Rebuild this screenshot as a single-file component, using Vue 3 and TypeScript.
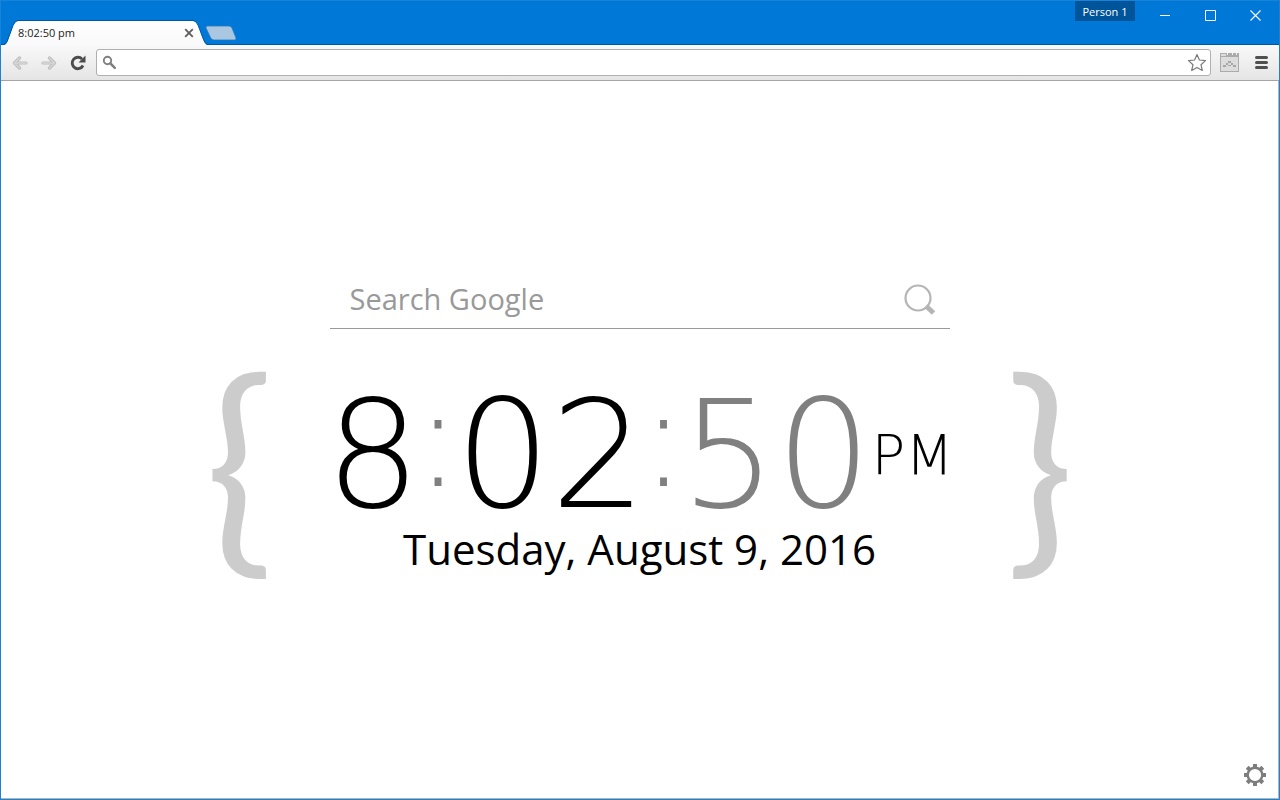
<script setup lang="ts">
import { ref } from 'vue'

const address = ref('')
const query = ref('')
const title = '8:02:50 pm'
const time = { hours: '8', minutes: '02', seconds: '50', period: 'PM' }
const date = 'Tuesday, August 9, 2016'
</script>

<template>
  <div class="window">
    <header class="titlebar">
      <div class="tabs">
        <div class="tab">
          <svg class="tab-shape" width="208" height="26" viewBox="0 0 208 26" aria-hidden="true">
            <defs>
              <linearGradient id="tabFill" x1="0" y1="0" x2="0" y2="1">
                <stop offset="0" stop-color="#ffffff" />
                <stop offset="1" stop-color="#f9f9f9" />
              </linearGradient>
            </defs>
            <path d="M0 26V25C3 25 4 23 5 20L10 6Q12 1 15 1H190Q193 1 195 5L200 19C202 24 203 25 206 25V26Z" fill="url(#tabFill)" />
            <path d="M0 24.500C3 24 4 22 5 19L10 5.500Q12 .5 15 .5H190Q193 .5 195 5L200 18C202 23 203 24.500 206 24.500" fill="none" stroke="#0058a3" />
          </svg>
          <span class="tab-title">{{ title }}</span>
          <button class="tab-close" aria-label="Close tab">
            <svg width="10" height="10" viewBox="0 0 10 10"><path d="M1.200 1.200L8.800 8.800M8.800 1.200L1.200 8.800" stroke="#5f5f5f" stroke-width="1.900" /></svg>
          </button>
        </div>
        <button class="new-tab" aria-label="New tab">
          <svg width="32" height="16" viewBox="0 0 32 16"><path d="M2.500 1H24Q26 1 27 3L31 13Q31.500 15 29.500 15H9Q6.500 15 5.500 12.500L1 3Q.5 1 2.500 1Z" fill="#a9c7e0" stroke="#2a78bd" stroke-width=".8" /></svg>
        </button>
      </div>
      <div class="controls">
        <button class="person">Person 1</button>
        <button class="control" aria-label="Minimize"><svg width="11" height="11" viewBox="0 0 11 11"><path d="M0 5.500H10" stroke="#fff" /></svg></button>
        <button class="control" aria-label="Maximize"><svg width="11" height="11" viewBox="0 0 11 11"><path d="M.5 .5H10.500V10.500H.5Z" fill="none" stroke="#fff" /></svg></button>
        <button class="control" aria-label="Close window"><svg width="11" height="11" viewBox="0 0 11 11"><path d="M.5 .5L10.500 10.500M10.500 .5L.5 10.500" stroke="#fff" stroke-width="1.100" /></svg></button>
      </div>
    </header>

    <nav class="toolbar">
      <button class="tool" aria-label="Back">
        <svg width="16" height="14" viewBox="0 0 16 14"><path d="M7.500 2L2.500 7L7.500 12M3 7H14" fill="none" stroke="#bcbcbc" stroke-width="3.200" stroke-linecap="round" stroke-linejoin="round" /><path d="M7.500 2L2.500 7L7.500 12M3 7H14" fill="none" stroke="#d6d6d6" stroke-width="1.500" stroke-linecap="round" /></svg>
      </button>
      <button class="tool" aria-label="Forward">
        <svg width="16" height="14" viewBox="0 0 16 14"><path d="M8.500 2L13.500 7L8.500 12M2 7H13" fill="none" stroke="#bcbcbc" stroke-width="3.200" stroke-linecap="round" stroke-linejoin="round" /><path d="M8.500 2L13.500 7L8.500 12M2 7H13" fill="none" stroke="#d6d6d6" stroke-width="1.500" stroke-linecap="round" /></svg>
      </button>
      <button class="tool" aria-label="Reload">
        <svg width="16" height="16" viewBox="0 0 16 16"><path d="M12 4A5.700 5.700 0 1 0 13 10.500" fill="none" stroke="#4c4c4c" stroke-width="2.900" /><path d="M15.500 .5V7.500H8.500Z" fill="#4c4c4c" /></svg>
      </button>
      <div class="omnibox">
        <svg width="15" height="15" viewBox="0 0 15 15" aria-hidden="true"><circle cx="5.500" cy="5.500" r="3.700" fill="none" stroke="#808080" stroke-width="1.900" /><path d="M8.500 8.500L12.800 12.800" stroke="#808080" stroke-width="2.500" stroke-linecap="round" /></svg>
        <input v-model="address" type="text" aria-label="Address" />
        <button class="star" aria-label="Bookmark this page">
          <svg width="20" height="19" viewBox="0 0 20 19"><path d="M10 1.500L12.400 7L18.500 7.600L14 11.700L15.300 17.500L10 14.400L4.700 17.500L6 11.700L1.500 7.600L7.600 7Z" fill="#fff" stroke="#7b7b7b" stroke-width="1.200" stroke-linejoin="round" /></svg>
        </button>
      </div>
      <button class="extension" aria-label="Extension">
        <svg width="19" height="19" viewBox="0 0 19 19" shape-rendering="crispEdges"><path d="M0 0H7V2H8V0H12V2H13V0H16V2H17V0H19V19H0Z" fill="#ababab" /><path d="M1 1H6V3H1ZM1 4H18V18H1Z" fill="#dcdcdc" /><path d="M8 8h3v2h-3zM6 10h2v2h-2zM11 10h2v2h-2zM3 12h3v2h-3zM13 12h3v2h-3zM8 12h3v1h-3z" fill="#a6a6a6" /></svg>
      </button>
      <button class="menu" aria-label="Menu">
        <svg width="13" height="13" viewBox="0 0 13 13"><path d="M1.500 1.500H11.500M1.500 6.500H11.500M1.500 11.500H11.500" stroke="#505050" stroke-width="3" stroke-linecap="round" /></svg>
      </button>
    </nav>

    <main class="page">
      <form class="search" @submit.prevent>
        <input v-model="query" type="text" placeholder="Search Google" aria-label="Search Google" />
        <button aria-label="Search">
          <svg width="32" height="32" viewBox="0 0 32 32"><circle cx="14" cy="15" r="12.500" fill="none" stroke="#b5b5b5" stroke-width="2.200" /><path d="M22 23L29.500 30" stroke="#b5b5b5" stroke-width="5" /></svg>
        </button>
      </form>

      <section class="clock">
        <span class="brace">{</span>
        <div class="readout">
          <div class="time">
            <span>{{ time.hours }}</span>
            <span class="colon">:</span>
            <span>{{ time.minutes }}</span>
            <span class="colon">:</span>
            <span class="seconds">{{ time.seconds }}</span>
            <span class="period">{{ time.period }}</span>
          </div>
          <div class="date">{{ date }}</div>
        </div>
        <span class="brace">}</span>
      </section>

      <button class="settings" aria-label="Settings">
        <svg width="22" height="22" viewBox="0 0 22 22"><g fill="#7d7d7d"><rect v-for="a in [0, 45, 90, 135, 180, 225, 270, 315]" :key="a" x="9" y="0" width="4" height="5" :transform="`rotate(${a} 11 11)`" /></g><circle cx="11" cy="11" r="7.300" fill="#fff" stroke="#7d7d7d" stroke-width="2.400" /></svg>
      </button>
    </main>
  </div>
</template>

<style>
body {
  margin: 0;
}
</style>

<style scoped>
.window {
  box-sizing: border-box;
  min-height: 100vh;
  display: flex;
  flex-direction: column;
  border: 1px solid #1883d7;
  background: #fff;
  font-family: "Open Sans", "Noto Sans", sans-serif;
}

button {
  display: flex;
  align-items: center;
  justify-content: center;
  padding: 0;
  border: 0;
  background: none;
  font: inherit;
}

input {
  min-width: 0;
  flex: 1;
  padding: 0;
  border: 0;
  outline: 0;
  background: none;
  font: inherit;
}

.titlebar {
  display: flex;
  justify-content: space-between;
  height: 44px;
  background: #0078d7;
  box-shadow: inset 0 -1px #0058a3;
}

.tabs {
  display: flex;
  align-items: flex-end;
  padding-left: 2px;
}

.tab {
  position: relative;
  box-sizing: border-box;
  display: flex;
  align-items: center;
  justify-content: space-between;
  width: 204px;
  height: 25px;
  padding: 0 12px 0 15px;
}

.tab-shape {
  position: absolute;
  left: 0;
  top: 0;
}

.tab-title {
  position: relative;
  color: #222;
  font-size: 11px;
  line-height: 24px;
}

.tab-close {
  position: relative;
  width: 12px;
  height: 24px;
}

.new-tab {
  height: 20px;
  align-items: flex-start;
  margin-left: -2px;
}

.controls {
  display: flex;
  align-items: flex-start;
  padding-right: 1px;
}

.person {
  width: 60px;
  height: 20px;
  margin-right: 8px;
  background: #00549a;
  color: #fff;
  font-size: 11px;
  font-weight: 500;
}

.control {
  width: 45px;
  height: 28px;
}

.toolbar {
  display: flex;
  align-items: center;
  height: 35px;
  padding: 0 11px 0 4px;
  background: linear-gradient(#f9f9f9, #e5e5e5);
  border-bottom: 1px solid #a5a5a5;
}

.tool {
  width: 29px;
  height: 28px;
}

.omnibox {
  box-sizing: border-box;
  flex: 1;
  display: flex;
  align-items: center;
  gap: 6px;
  height: 27px;
  margin-left: 4px;
  padding: 0 3px 0 5px;
  border: 1px solid #b0b0b0;
  border-radius: 3px;
  background: #fff;
  font-size: 14px;
}

.extension {
  margin-left: 9px;
}

.menu {
  margin-left: 16px;
}

.page {
  position: relative;
  flex: 1;
  display: flex;
  flex-direction: column;
  align-items: center;
  padding: 190px 20px 0;
  border-right: 1px solid #b4b4b4;
  border-bottom: 1px solid #b4b4b4;
}

.search {
  box-sizing: border-box;
  display: flex;
  align-items: center;
  width: 100%;
  max-width: 620px;
  height: 58px;
  padding: 0 14px 2px 20px;
  border-bottom: 1px solid #999;
  font-size: 29px;
}

.search input::placeholder {
  color: #999;
  opacity: 1;
}

.clock {
  display: flex;
  align-items: flex-start;
  gap: 52px;
  margin-top: 51px;
}

.brace {
  color: #ccc;
  font-family: Lato, sans-serif;
  font-size: 228px;
  line-height: 156px;
}

.readout {
  display: flex;
  flex-direction: column;
  align-items: center;
}

.time {
  display: flex;
  align-items: center;
  font-family: "DejaVu Sans", sans-serif;
  font-size: 150px;
  font-weight: 200;
  line-height: 150px;
}

.colon {
  align-self: flex-start;
  margin: 0 -6px;
  color: #808080;
  font-size: 138px;
  line-height: 118px;
}

.seconds {
  color: #808080;
}

.period {
  font-size: 56px;
}

.date {
  font-size: 42px;
  line-height: 38px;
}

.settings {
  position: absolute;
  right: 12px;
  bottom: 12px;
}
</style>
